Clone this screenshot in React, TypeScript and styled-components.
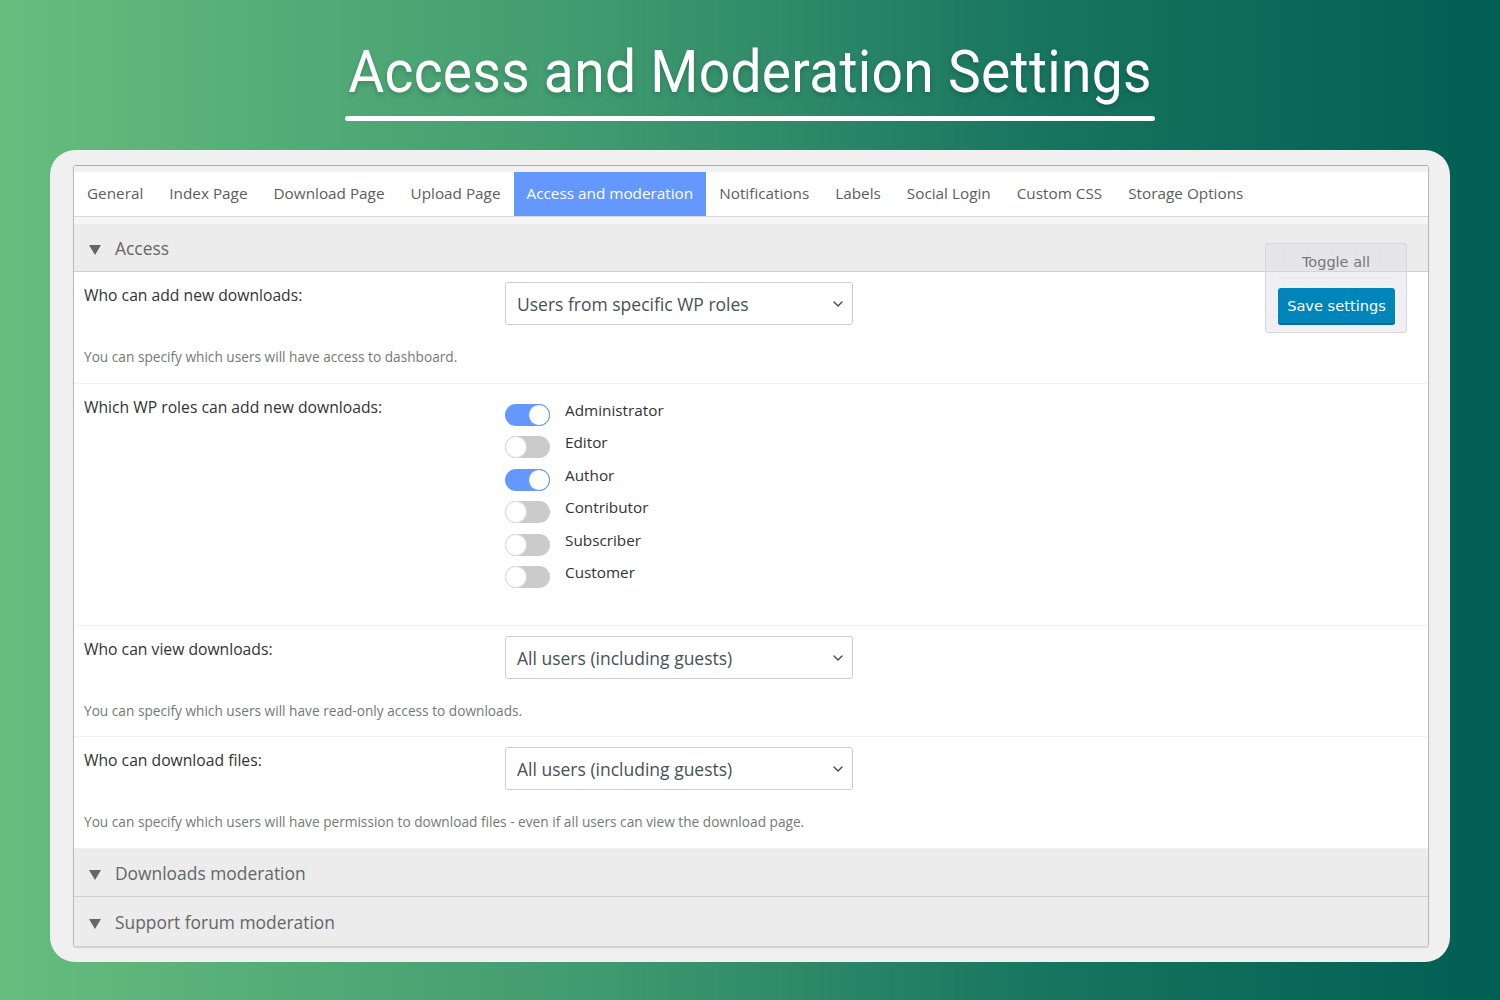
import React from 'react'
import styled, { createGlobalStyle } from 'styled-components'
import { ChevronDown } from 'lucide-react'

const UI_FONT = `"Open Sans", "Noto Sans", sans-serif`
const BOX_FONT = `"DejaVu Sans", sans-serif`

const Global = createGlobalStyle`
  html, body { margin: 0; padding: 0; }
  body { font-family: ${UI_FONT}; }
`

const Page = styled.div`
  width: 1500px;
  height: 1000px;
  box-sizing: border-box;
  padding-top: 38px;
  background: linear-gradient(90deg, #66bd7e 0%, #3f9a6f 40%, #17745f 70%, #005f53 100%);
  overflow: hidden;
`

const TitleWrap = styled.div`
  width: 810px;
  margin: 0 auto 29px;
  text-align: center;
`

const Title = styled.h1`
  height: 78px;
  margin: 0 -40px;
  font-family: "Roboto", sans-serif;
  font-weight: 400;
  font-size: 59px;
  line-height: 68px;
  letter-spacing: 0.3px;
  color: #fff;
  text-shadow: 0 3px 6px rgba(0, 0, 0, 0.18);
  white-space: nowrap;
  transform: scaleX(0.935);
`

const Underline = styled.div`
  height: 5px;
  background: #fff;
  border-radius: 3px;
`

const Card = styled.div`
  box-sizing: border-box;
  width: 1400px;
  height: 812px;
  margin: 0 auto;
  padding: 15px 21px 15px 23px;
  background: #f0f0f0;
  border-radius: 25px;
`

const Panel = styled.div`
  position: relative;
  box-sizing: border-box;
  height: 782px;
  background: #fff;
  border: 1px solid #b9b9b9;
  border-top-color: #aaa;
  border-radius: 3px;
  box-shadow: 0 1px 1px rgba(0, 0, 0, 0.12);
`

const TopStrip = styled.div`
  height: 6px;
  background: #f1f1f1;
`

const Tabs = styled.nav`
  display: flex;
  box-sizing: border-box;
  height: 45px;
  padding-bottom: 0;
  border-bottom: 1px solid #d6d6d6;
`

const Tab = styled.a<{ $active?: boolean }>`
  display: flex;
  align-items: center;
  padding: 0 13px 2px;
  font-size: 15.3px;
  color: ${p => (p.$active ? '#fff' : '#5d5d5d')};
  background: ${p => (p.$active ? '#6498fe' : 'transparent')};
`

const TabGap = styled.div`
  height: 7px;
  background: #f6f6f6;
`

const SectionHeader = styled.div<{ $height: number }>`
  display: flex;
  align-items: center;
  box-sizing: border-box;
  height: ${p => p.$height}px;
  padding-left: 15px;
  background: #ececec;
  border-bottom: 1px solid #cfcfcf;
  font-size: 17.4px;
  color: #666;
`

const Arrow = styled.span`
  width: 0;
  height: 0;
  margin: 4px 14px 0 0;
  border-left: 6.5px solid transparent;
  border-right: 6.5px solid transparent;
  border-top: 10px solid #666;
`

const Row = styled.div<{ $height: number }>`
  display: grid;
  grid-template-columns: 421px 1fr;
  align-content: start;
  box-sizing: border-box;
  height: ${p => p.$height}px;
  padding: 10px 10px 0;
  border-bottom: 1px solid #f1f1f1;
`

const Label = styled.div`
  padding-top: 3px;
  font-size: 15.7px;
  line-height: 20px;
  color: #333;
`

const SelectBox = styled.div`
  display: flex;
  align-items: center;
  justify-content: space-between;
  box-sizing: border-box;
  width: 348px;
  height: 43px;
  padding: 0 6px 0 11px;
  background: #fff;
  border: 1px solid #cdcdcd;
  border-radius: 3px;
  font-size: 17.5px;
  color: #495057;
`

const Help = styled.p`
  grid-column: 1 / -1;
  margin: 22px 0 0;
  font-size: 13.68px;
  line-height: 20px;
  color: #777;
`

const Toggles = styled.div`
  display: flex;
  flex-direction: column;
  gap: 10.5px;
  padding-top: 9.9px;
`

const ToggleRow = styled.div`
  display: flex;
  gap: 15px;
  height: 22px;
`

const Switch = styled.span<{ $on?: boolean }>`
  position: relative;
  display: block;
  box-sizing: border-box;
  width: 45px;
  height: 22px;
  border-radius: 11px;
  background: ${p => (p.$on ? '#6498fe' : '#cbcbcb')};
  &::after {
    content: '';
    position: absolute;
    top: 0;
    left: ${p => (p.$on ? '23px' : '0')};
    box-sizing: border-box;
    width: 22px;
    height: 22px;
    border-radius: 50%;
    background: #fff;
    border: 1px solid ${p => (p.$on ? '#6498fe' : '#ddd')};
  }
`

const ToggleLabel = styled.span`
  margin-top: -5px;
  font-size: 15.3px;
  line-height: 22px;
  color: #333;
`

const Floating = styled.div`
  position: absolute;
  top: 77px;
  right: 21px;
  box-sizing: border-box;
  width: 142px;
  height: 90px;
  padding: 0 12px;
  background-color: rgba(222, 222, 230, 0.42);
  background-image: radial-gradient(rgba(150, 150, 170, 0.07) 0.6px, transparent 0.8px);
  background-size: 3px 3px;
  border: 1px solid #d6d6de;
  border-radius: 3px;
  font-family: ${BOX_FONT};
`

const ToggleAll = styled.div`
  height: 34px;
  box-sizing: border-box;
  padding-top: 9px;
  border-bottom: 1px solid #e6e6e8;
  text-align: center;
  font-size: 14.5px;
  line-height: 18px;
  color: #777;
`

const SaveButton = styled.button`
  display: block;
  box-sizing: border-box;
  width: 117px;
  height: 37px;
  margin-top: 10px;
  padding: 0;
  background: #0085ba;
  border: 0;
  border-bottom: 2px solid #006799;
  border-radius: 3px;
  font-family: ${BOX_FONT};
  font-size: 14.6px;
  color: #fff;
`

const tabs = ['General', 'Index Page', 'Download Page', 'Upload Page', 'Access and moderation', 'Notifications', 'Labels', 'Social Login', 'Custom CSS', 'Storage Options']

const roles = [
  { name: 'Administrator', on: true },
  { name: 'Editor', on: false },
  { name: 'Author', on: true },
  { name: 'Contributor', on: false },
  { name: 'Subscriber', on: false },
  { name: 'Customer', on: false },
]

const Select = ({ value }: { value: string }) => (
  <SelectBox>
    {value}
    <ChevronDown size={16} strokeWidth={2} color="#444" />
  </SelectBox>
)

export default function App() {
  return (
    <Page>
      <Global />
      <TitleWrap>
        <Title>Access and Moderation Settings</Title>
        <Underline />
      </TitleWrap>
      <Card>
        <Panel>
          <TopStrip />
          <Tabs>
            {tabs.map(t => (
              <Tab key={t} $active={t === 'Access and moderation'}>{t}</Tab>
            ))}
          </Tabs>
          <TabGap />
          <SectionHeader $height={48}><Arrow />Access</SectionHeader>
          <Row $height={112}>
            <Label>Who can add new downloads:</Label>
            <Select value="Users from specific WP roles" />
            <Help>You can specify which users will have access to dashboard.</Help>
          </Row>
          <Row $height={242}>
            <Label>Which WP roles can add new downloads:</Label>
            <Toggles>
              {roles.map(r => (
                <ToggleRow key={r.name}>
                  <Switch $on={r.on} />
                  <ToggleLabel>{r.name}</ToggleLabel>
                </ToggleRow>
              ))}
            </Toggles>
          </Row>
          <Row $height={111}>
            <Label>Who can view downloads:</Label>
            <Select value="All users (including guests)" />
            <Help>You can specify which users will have read-only access to downloads.</Help>
          </Row>
          <Row $height={112}>
            <Label>Who can download files:</Label>
            <Select value="All users (including guests)" />
            <Help>You can specify which users will have permission to download files - even if all users can view the download page.</Help>
          </Row>
          <SectionHeader $height={48}><Arrow />Downloads moderation</SectionHeader>
          <SectionHeader $height={50}><Arrow />Support forum moderation</SectionHeader>
          <Floating>
            <ToggleAll>Toggle all</ToggleAll>
            <SaveButton>Save settings</SaveButton>
          </Floating>
        </Panel>
      </Card>
    </Page>
  )
}
